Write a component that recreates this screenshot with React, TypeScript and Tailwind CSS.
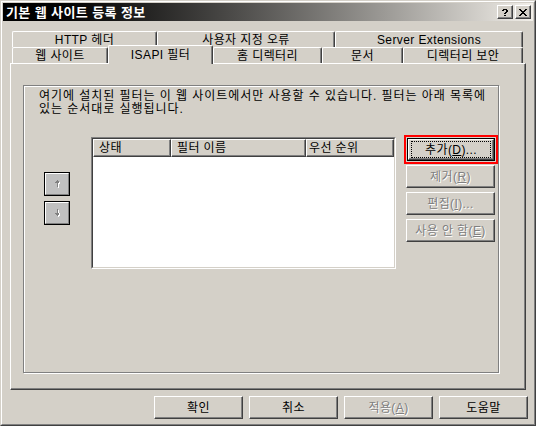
import React from "react";

const bevel =
  "border border-t-white border-l-white border-b-[#404040] border-r-[#404040] shadow-[inset_-1px_-1px_0_#808080]";
const disabled = "text-[#808080] [text-shadow:1px_1px_0_#fff]";

function Pix({ rows, colors }: { rows: string[]; colors: Record<string, string> }) {
  const h = rows.length;
  const w = rows[0].length;
  const rects: React.ReactNode[] = [];
  rows.forEach((r, y) =>
    r.split("").forEach((c, x) => {
      if (colors[c])
        rects.push(<rect key={x + "-" + y} x={x} y={y} width={1} height={1} fill={colors[c]} />);
    })
  );
  return (
    <svg width={w} height={h} viewBox={`0 0 ${w} ${h}`} shapeRendering="crispEdges" className="block">
      {rects}
    </svg>
  );
}

const XGLYPH = ["kk....kk", ".kk..kk.", "..kkkk..", "...kk...", "..kkkk..", ".kk..kk.", "kk....kk"];
const QGLYPH = [".kkkk.", "kk..kk", "....kk", "...kk.", "..kk..", "......", "..kk.."];
const UP = ["..g..", ".ggg.", "ggggw", "..gww", "..gw.", "..gw.", "..gw.", "...w."];
const DOWN = ["..g..", "..gw.", "..gw.", "..gw.", "ggggw", ".gggw", "..gww", "...w."];

function CapBtn({ rows, className = "" }: { rows: string[]; className?: string }) {
  return (
    <div className={`w-[16px] h-[14px] bg-[#d4d0c8] ${bevel} flex items-center justify-center ${className}`}>
      <Pix rows={rows} colors={{ k: "#000" }} />
    </div>
  );
}

function ArrowBtn({ rows }: { rows: string[] }) {
  return (
    <div className="w-[26px] h-[24px] border border-black">
      <div className="w-full h-full bg-[#c0c0c0] border border-t-white border-l-white border-b-[#808080] border-r-[#808080] flex items-center justify-center">
        <Pix rows={rows} colors={{ g: "#808080", w: "#ffffff" }} />
      </div>
    </div>
  );
}

function Btn({ children, className = "", dis = false }: { children: React.ReactNode; className?: string; dis?: boolean }) {
  return (
    <div
      className={`h-[23px] w-[89px] bg-[#d4d0c8] ${bevel} flex items-center justify-center whitespace-nowrap ${
        dis ? disabled : ""
      } ${className}`}
    >
      {children}
    </div>
  );
}

const tabBase =
  "h-full border-t border-l border-white border-r border-r-[#404040] rounded-t-[2px] shadow-[inset_-1px_0_0_#808080] flex items-center justify-center whitespace-nowrap";

const headCell =
  "h-full border border-t-white border-l-white border-b-[#404040] border-r-[#404040] shadow-[inset_-1px_-1px_0_#808080] flex items-center whitespace-nowrap";

export default function App() {
  return (
    <div className="w-[536px] h-[426px] bg-[#d4d0c8] [font-family:'Liberation_Sans','Noto_Sans_CJK_KR',sans-serif] text-[12px] tracking-[0.4px] text-black leading-none overflow-hidden">
      <div className="w-full h-full border border-t-[#d4d0c8] border-l-[#d4d0c8] border-b-[#404040] border-r-[#404040]">
        <div className="w-full h-full border border-t-white border-l-white border-b-[#808080] border-r-[#808080] p-px flex flex-col">
          {/* Title bar */}
          <div className="h-[18px] flex items-center bg-linear-to-r from-black to-[#f2efe9] pl-[3px] pr-[2px]">
            <span className="flex-1 text-white font-bold text-[13px] tracking-[0.4px] leading-none whitespace-nowrap">
              기본 웹 사이트 등록 정보
            </span>
            <CapBtn rows={QGLYPH} />
            <CapBtn rows={XGLYPH} className="ml-[2px]" />
          </div>

          <div className="px-[7px] pt-[10px] flex flex-col">
            {/* Tab row 1 */}
            <div className="ml-[2px] flex h-[16px]">
              <div className={`${tabBase} w-[145px]`}>HTTP 헤더</div>
              <div className={`${tabBase} w-[178px]`}>사용자 지정 오류</div>
              <div className={`${tabBase} w-[188px]`}>Server Extensions</div>
            </div>
            {/* Tab row 2 */}
            <div className="ml-[2px] flex h-[16px]">
              <div className={`${tabBase} w-[96px]`}>웹 사이트</div>
              <div className="relative z-10 -mt-[2px] h-[19px] w-[105px] bg-[#d4d0c8] border-t border-l border-white border-r border-r-[#404040] rounded-t-[2px] shadow-[inset_-1px_0_0_#808080] flex items-center justify-center whitespace-nowrap pb-[1px]">
                ISAPI 필터
              </div>
              <div className={`${tabBase} w-[109px]`}>홈 디렉터리</div>
              <div className={`${tabBase} w-[81px]`}>문서</div>
              <div className={`${tabBase} w-[120px]`}>디렉터리 보안</div>
            </div>

            {/* Panel */}
            <div className={`h-[327px] ${bevel} flex flex-col`}>
              <div className="ml-[12px] mt-[21px] w-[476px] h-[288px] border border-[#808080] shadow-[inset_1px_1px_0_#fff,1px_1px_0_#fff] pl-[15px] pt-[4px] flex flex-col">
                <div className="leading-[13px] tracking-[0.95px] whitespace-nowrap">
                  여기에 설치된 필터는 이 웹 사이트에서만 사용할 수 있습니다. 필터는 아래 목록에
                  <br />
                  있는 순서대로 실행됩니다.
                </div>

                <div className="mt-[21px] flex items-start">
                  <div className="ml-[5px] mt-[35px] flex flex-col gap-[5px]">
                    <ArrowBtn rows={UP} />
                    <ArrowBtn rows={DOWN} />
                  </div>

                  {/* List view */}
                  <div className="ml-[21px] w-[305px] h-[132px] border border-t-[#808080] border-l-[#808080] border-b-white border-r-white">
                    <div className="w-full h-full border border-t-[#404040] border-l-[#404040] border-b-[#d4d0c8] border-r-[#d4d0c8] bg-white flex flex-col">
                      <div className="h-[18px] flex bg-[#d4d0c8]">
                        <div className={`${headCell} w-[78px] pl-[5px]`}>상태</div>
                        <div className={`${headCell} w-[135px] pl-[5px]`}>필터 이름</div>
                        <div className={`${headCell} flex-1 pl-[2px]`}>우선 순위</div>
                      </div>
                    </div>
                  </div>

                  {/* Buttons */}
                  <div className="ml-[8px] -mt-[2px] flex flex-col">
                    <div className="w-[94px] border-2 border-[#ff0000] p-px">
                      <div className="h-[23px] w-full border border-black">
                        <div className={`w-full h-full bg-[#d4d0c8] ${bevel} px-[2px] py-[1px] flex`}>
                          <div className="flex-1 border border-dotted border-black flex items-center justify-center whitespace-nowrap">
                            추가(<u>D</u>)...
                          </div>
                        </div>
                      </div>
                    </div>
                    <Btn dis className="ml-[2px] mt-px">
                      제거(<u>R</u>)
                    </Btn>
                    <Btn dis className="ml-[2px] mt-[4px]">
                      편집(<u>I</u>)...
                    </Btn>
                    <Btn dis className="ml-[2px] mt-[4px]">
                      사용 안 함(<u>E</u>)
                    </Btn>
                  </div>
                </div>
              </div>
            </div>

            {/* Bottom buttons */}
            <div className="mt-[6px] -mr-[2px] flex justify-end gap-[6px]">
              <Btn>확인</Btn>
              <Btn>취소</Btn>
              <Btn dis>
                적용(<u>A</u>)
              </Btn>
              <Btn>도움말</Btn>
            </div>
          </div>
        </div>
      </div>
    </div>
  );
}
